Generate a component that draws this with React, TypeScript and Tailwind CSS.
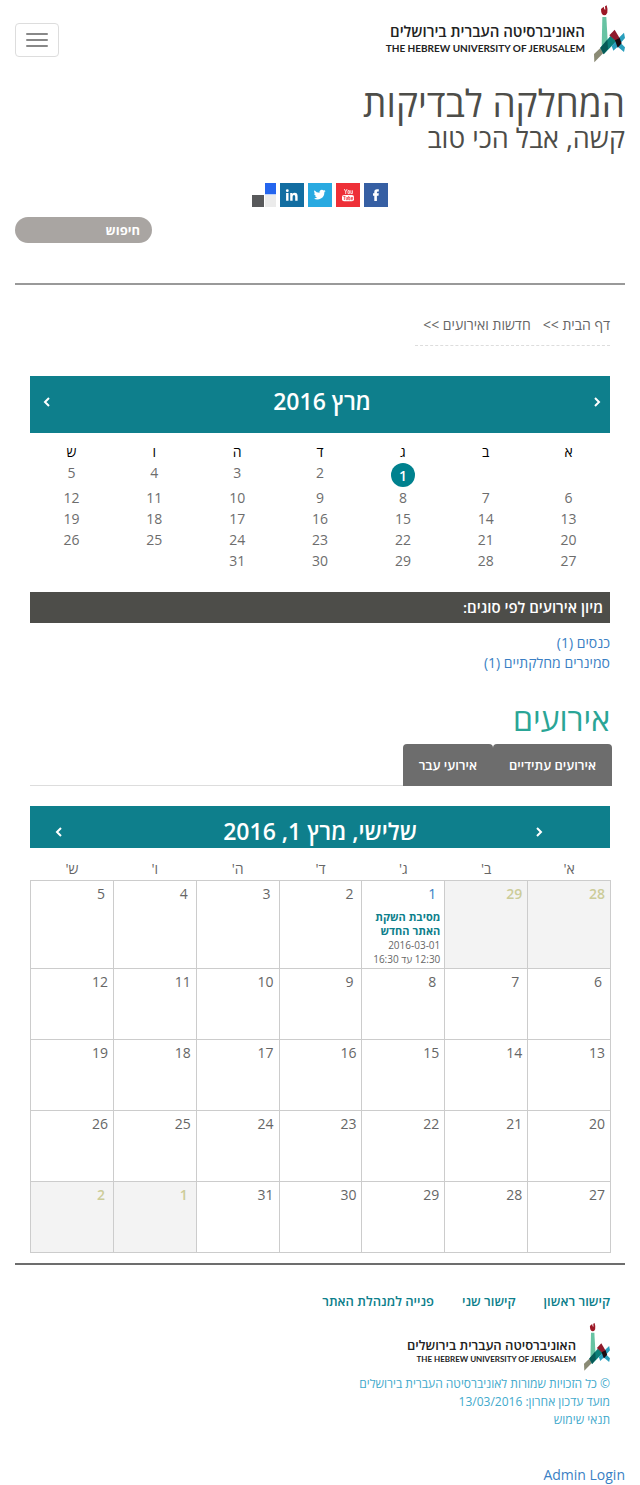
import React from "react";

const monthWeeks: (number | null)[][] = [
  [null, null, 1, 2, 3, 4, 5],
  [6, 7, 8, 9, 10, 11, 12],
  [13, 14, 15, 16, 17, 18, 19],
  [20, 21, 22, 23, 24, 25, 26],
  [27, 28, 29, 30, 31, null, null],
];

const gridWeeks: number[][] = [
  [28, 29, 1, 2, 3, 4, 5],
  [6, 7, 8, 9, 10, 11, 12],
  [13, 14, 15, 16, 17, 18, 19],
  [20, 21, 22, 23, 24, 25, 26],
  [27, 28, 29, 30, 31, 1, 2],
];

const weekdays = ["א", "ב", "ג", "ד", "ה", "ו", "ש"];

function Emblem({ className }: { className: string }) {
  return (
    <svg viewBox="26 16 93 172" className={className} aria-hidden="true">
      <path d="M47 27 L55 20 L57 28 L60 29 L59 19 L64 16 Q68 28 66 38 Q63 46 56 46 Q47 44 47 27Z" fill="#9c1826" />
      <path d="M51 51 H63 L67 122 L49 145Z" fill="#68c3a3" />
      <path d="M26 162 L46 143 L54 159 L27 187Z" fill="#8b8b75" />
      <path d="M45 143 L76 107 L94 123 L55 163Z" fill="#0b7f78" />
      <path d="M45 143 L66 119 L68 146 L55 163Z" fill="#065a57" />
      <path d="M100 114 L116 98 L119 114 L106 129 L119 142 L116 156 L97 140 L84 152 L79 138Z" fill="#2a9fbd" />
      <path d="M72 106 L88 89 L104 116 L94 125Z" fill="#8f1a2b" />
      <path d="M89 121 L103 114 L109 130 L97 143Z" fill="#1b0a10" />
    </svg>
  );
}

function Chevron({ left = false }: { left?: boolean }) {
  return (
    <svg viewBox="0 0 8 12" className="h-3 w-2" fill="none" stroke="white" strokeWidth="2" aria-hidden="true">
      <path d={left ? "M6 2 L2 6 L6 10" : "M2 2 L6 6 L2 10"} />
    </svg>
  );
}

function SocialLinks() {
  return (
    <div className="flex justify-center gap-1">
      <a href="#facebook" aria-label="Facebook">
        <svg viewBox="0 0 24 24" className="size-6">
          <path d="M0 0H24V24H0Z" fill="#365fa3" />
          <path d="M10.3 18V12.7H9V10.3H10.3V9Q10.3 6.3 13 6.3H14.8V8.6H13.7Q12.9 8.6 12.9 9.4V10.3H14.8L14.5 12.7H12.9V18Z" fill="white" />
        </svg>
      </a>
      <a href="#youtube" aria-label="YouTube">
        <svg viewBox="0 0 24 24" className="size-6">
          <path d="M0 0H24V24H0Z" fill="#ee3038" />
          <path d="M8.3 6L9.7 8.7V11M11.1 6L9.7 8.7M12 7.6H13.4V10.6H12ZM14.8 7.3V10.6H16.4V7.3" fill="none" stroke="white" strokeWidth=".8" />
          <rect x="6" y="12" width="12" height="6.2" rx="2" fill="white" />
          <path d="M7.2 13.4H9.6M8.4 13.4V17M10.2 14V16.7H11.5V14M12.7 13V16.8H13.9V14.5H12.7M16.8 16.7H15.2V14.5H16.8V15.5H15.2" fill="none" stroke="#ee3038" strokeWidth=".7" />
        </svg>
      </a>
      <a href="#twitter" aria-label="Twitter">
        <svg viewBox="0 0 24 24" className="size-6">
          <path d="M0 0H24V24H0Z" fill="#29aae1" />
          <path transform="translate(5.6 5.6) scale(.5)" d="M24 4.6a10 10 0 0 1-2.8.8 5 5 0 0 0 2.1-2.7 10 10 0 0 1-3.1 1.2 4.9 4.9 0 0 0-8.4 4.5A14 14 0 0 1 1.7 3.1a4.9 4.9 0 0 0 1.5 6.6 4.9 4.9 0 0 1-2.2-.6 4.9 4.9 0 0 0 3.9 4.9 5 5 0 0 1-2.2.1 4.9 4.9 0 0 0 4.6 3.4A9.9 9.9 0 0 1 0 19.5 14 14 0 0 0 21.5 7.1 10 10 0 0 0 24 4.6Z" fill="white" />
        </svg>
      </a>
      <a href="#linkedin" aria-label="LinkedIn">
        <svg viewBox="0 0 24 24" className="size-6">
          <path d="M0 0H24V24H0Z" fill="#126da1" />
          <circle cx="7.3" cy="7.7" r="1.4" fill="white" />
          <path d="M6.1 10H8.5V17.7H6.1ZM10.2 10H12.4V11Q13.2 9.8 14.7 9.8Q17.6 9.8 17.6 13.2V17.7H15.2V13.7Q15.2 11.9 14 11.9Q12.6 11.9 12.6 13.8V17.7H10.2Z" fill="white" />
        </svg>
      </a>
      <a href="#delicious" aria-label="Delicious">
        <svg viewBox="0 0 24 24" className="size-6">
          <path d="M13 0H24V11.3H13Z" fill="#2465ee" />
          <path d="M0 12H12V24H0Z" fill="#58595b" />
          <path d="M13 12H24V24H13Z" fill="#ebebeb" />
        </svg>
      </a>
    </div>
  );
}

function MonthCalendar() {
  return (
    <section>
      <div className="flex h-[57px] items-start justify-between bg-[#0e7f8c] px-[13px] text-white">
        <button type="button" aria-label="הקודם" className="-mr-1 mt-5">
          <Chevron />
        </button>
        <h2 className="mt-2 text-[23px] font-semibold leading-[34px]">מרץ 2016</h2>
        <button type="button" aria-label="הבא" className="mt-5">
          <Chevron left />
        </button>
      </div>
      <table className="mt-[9px] w-full table-fixed text-center text-sm text-[#6d6d6d]">
        <thead>
          <tr className="h-5 text-black">
            {weekdays.map((d) => (
              <th key={d} className="p-0 font-normal leading-5">{d}</th>
            ))}
          </tr>
        </thead>
        <tbody>
          {monthWeeks.map((week, r) => (
            <tr key={r} className="h-[21px]">
              {week.map((d, c) => (
                <td key={c} className="p-0 align-top leading-[21px]">
                  {d === 1 ? (
                    <a href="#day-1" className="mx-auto mt-px flex size-6 items-center justify-center rounded-full bg-[#00818e] font-semibold text-white">1</a>
                  ) : (
                    d
                  )}
                </td>
              ))}
            </tr>
          ))}
        </tbody>
      </table>
    </section>
  );
}

function EventCalendar() {
  return (
    <section className="mt-5">
      <div className="grid h-[42px] grid-cols-[1fr_auto_1fr] items-center bg-[#0e7f8c] text-white">
        <button type="button" aria-label="הקודם" className="mr-[67px] mt-2.5 justify-self-start">
          <Chevron />
        </button>
        <h2 className="mt-2 text-[23px] font-semibold leading-[34px]">שלישי, מרץ 1, 2016</h2>
        <button type="button" aria-label="הבא" className="ml-[25px] mt-2.5 justify-self-end">
          <Chevron left />
        </button>
      </div>
      <table className="-mr-px mt-[11px] w-[calc(100%+1px)] table-fixed border-collapse text-sm text-[#666]">
        <thead>
          <tr className="h-[21px]">
            {weekdays.map((d) => (
              <th key={d} className="p-0 font-normal leading-5">{d}'</th>
            ))}
          </tr>
        </thead>
        <tbody>
          {gridWeeks.map((week, r) => (
            <tr key={r} className={r === 0 ? "h-[88px]" : "h-[71px]"}>
              {week.map((d, c) => {
                const outside = (r === 0 && d > 20) || (r === 4 && d < 10);
                const event = r === 0 && d === 1;
                return (
                  <td
                    key={c}
                    className={
                      outside
                        ? d < 10
                          ? "border border-[#ccc] bg-[#f3f3f3] px-2 pt-1 text-right align-top font-semibold leading-[18px] text-[#cccc99]"
                          : "border border-[#ccc] bg-[#f3f3f3] px-[5px] pt-1 text-right align-top font-semibold leading-[18px] text-[#cccc99]"
                        : d < 10
                          ? "border border-[#ccc] px-2 pt-1 text-right align-top leading-[18px]"
                          : "border border-[#ccc] px-[5px] pt-1 text-right align-top leading-[18px]"
                    }
                  >
                    {event ? (
                      <>
                        <a href="#day-1" className="block text-[#3a7fc4]">1</a>
                        <div className="-mx-1 mt-1 text-[10px] leading-[14px]">
                          <a href="#event" className="block pt-[3px] text-[11px] font-bold leading-[14px] text-[#0e7f8c]">
                            מסיבת השקת<br />האתר החדש
                          </a>
                          <div>2016-03-01</div>
                          <div className="whitespace-nowrap">12:30 עד 16:30</div>
                        </div>
                      </>
                    ) : (
                      d
                    )}
                  </td>
                );
              })}
            </tr>
          ))}
        </tbody>
      </table>
    </section>
  );
}

export default function App() {
  return (
    <div dir="rtl" className="bg-white px-[15px] font-['Open_Sans','Noto_Sans',sans-serif] text-sm leading-5 text-[#666]">
      <header className="border-b-2 border-[#999] pb-10">
        <div className="flex h-[83px] items-start justify-between">
          <a href="#home" className="flex gap-[9px] pt-[5px] text-[#222]">
            <Emblem className="h-[58px] w-[31px]" />
            <div className="pt-4">
              <div className="text-[15px] font-semibold leading-5">האוניברסיטה העברית בירושלים</div>
              <div dir="ltr" className="whitespace-nowrap text-right font-['Lato',sans-serif] text-[10px] font-bold leading-[14px]">THE HEBREW UNIVERSITY OF JERUSALEM</div>
            </div>
          </a>
          <button type="button" aria-label="תפריט" className="mt-[23px] flex h-[34px] w-11 flex-col items-center justify-center gap-1 rounded border border-[#ddd]">
            <span className="h-0.5 w-[22px] rounded-sm bg-[#888]" />
            <span className="h-0.5 w-[22px] rounded-sm bg-[#888]" />
            <span className="h-0.5 w-[22px] rounded-sm bg-[#888]" />
          </button>
        </div>
        <h1 className="text-[37px] leading-10 text-[#4d4d49]">המחלקה לבדיקות</h1>
        <p className="text-[27px] leading-[30px] text-[#4d4d49]">קשה, אבל הכי טוב</p>
        <div className="mt-[30px]">
          <SocialLinks />
        </div>
        <form className="mt-2.5 flex justify-end" onSubmit={(e) => e.preventDefault()}>
          <input
            type="text"
            aria-label="חיפוש"
            placeholder="חיפוש"
            className="h-[26px] w-[137px] rounded-full bg-[#a9a5a2] px-3 text-[13px] font-bold text-white placeholder:text-white placeholder:opacity-100"
          />
        </form>
      </header>

      <main className="px-[15px]">
        <nav className="mt-[30px] flex w-fit gap-3 border-b border-dashed border-[#ddd] pb-2.5 pl-2 leading-5" aria-label="נתיב">
          <a href="#home">דף הבית &gt;&gt;</a>
          <a href="#news">חדשות ואירועים &gt;&gt;</a>
        </nav>
        <div className="mt-[30px]">
          <MonthCalendar />
        </div>
        <h2 className="mt-[21px] h-[31px] bg-[#4d4d49] px-[7px] text-[15px] font-semibold leading-[31px] text-white">מיון אירועים לפי סוגים:</h2>
        <ul className="mt-2.5 leading-5 text-[#3a7fc4]">
          <li><a href="#conferences">כנסים (1)</a></li>
          <li><a href="#seminars">סמינרים מחלקתיים (1)</a></li>
        </ul>
        <h2 className="mt-[26px] text-[32px] leading-10 text-[#2aa596]">אירועים</h2>
        <div className="mt-[5px] flex border-b border-[#ddd]" role="tablist">
          <button type="button" role="tab" className="-mr-0.5 -mb-px h-[42px] rounded-t bg-[#6d6d6d] px-4 text-[13px] font-semibold text-white">אירועים עתידיים</button>
          <button type="button" role="tab" className="-mb-px h-[42px] rounded-t bg-[#6d6d6d] px-4 text-[13px] font-semibold text-white">אירועי עבר</button>
        </div>
        <EventCalendar />
      </main>

      <footer>
        <div className="mt-2.5 border-t-2 border-[#6d6d6d] px-[15px] pt-[26px]">
          <nav className="flex gap-7 text-[13px] font-semibold text-[#0e7f8c]">
            <a href="#first">קישור ראשון</a>
            <a href="#second">קישור שני</a>
            <a href="#contact">פנייה למנהלת האתר</a>
          </nav>
          <a href="#home" className="mt-3 flex w-fit gap-2 text-[#222]">
            <Emblem className="h-12 w-[26px]" />
            <div className="pt-3.5">
              <div className="text-[13px] font-semibold leading-4">האוניברסיטה העברית בירושלים</div>
              <div dir="ltr" className="whitespace-nowrap text-right font-['Lato',sans-serif] text-[8px] font-bold leading-3">THE HEBREW UNIVERSITY OF JERUSALEM</div>
            </div>
          </a>
          <div className="mt-1 text-xs leading-[18px] text-[#41a9cc]">
            <p>© כל הזכויות שמורות לאוניברסיטה העברית בירושלים</p>
            <p>מועד עדכון אחרון: 13/03/2016</p>
            <p><a href="#terms">תנאי שימוש</a></p>
          </div>
        </div>
        <a href="#login" className="mt-9 block w-fit text-[#3a7fc4]">Admin Login</a>
      </footer>
    </div>
  );
}
